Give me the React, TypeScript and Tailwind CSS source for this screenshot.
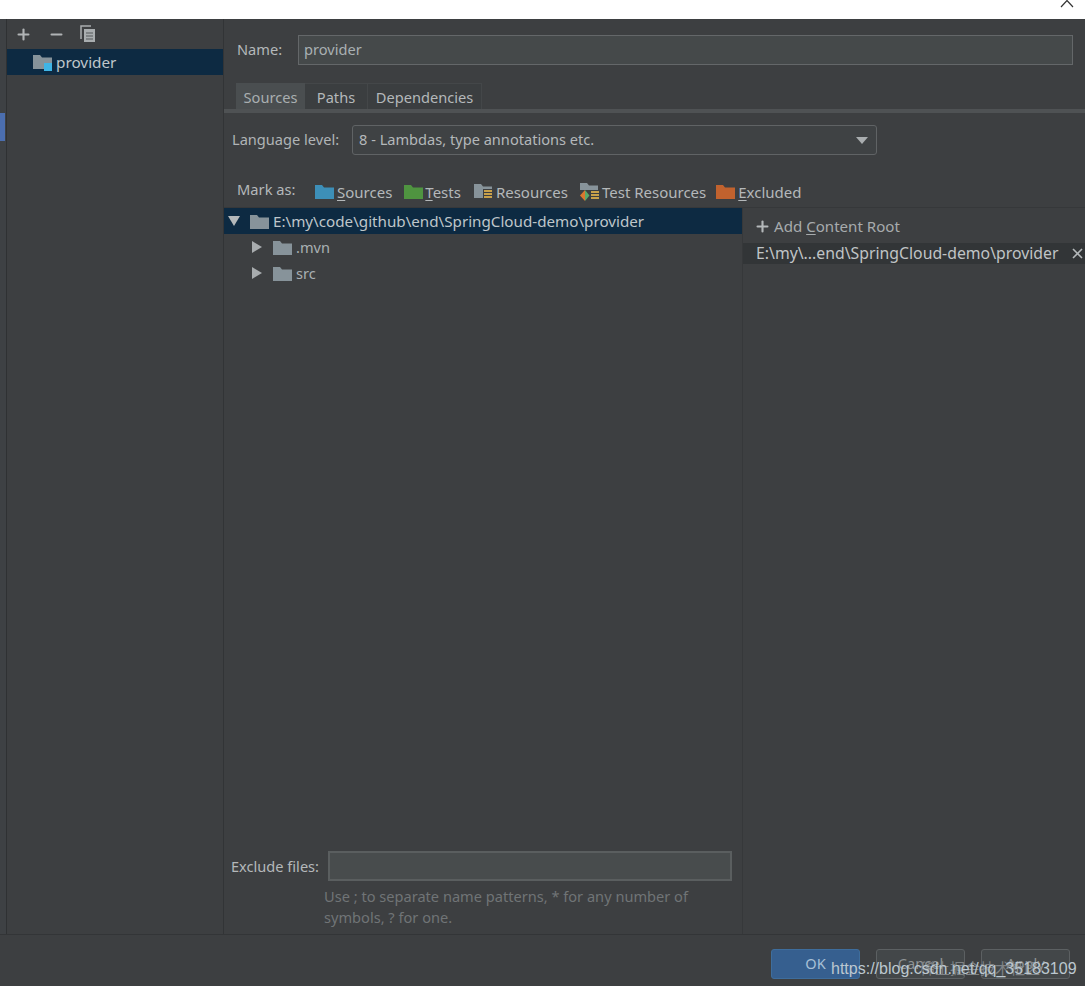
import { Plus, Minus } from "lucide-react";

function Folder({ color, className = "" }: { color: string; className?: string }) {
  return (
    <svg width="19" height="15" viewBox="0 0 19 15" className={`shrink-0 ${className}`}>
      <path d="M0 1h7l2 2.5h10V15H0z" fill={color} />
    </svg>
  );
}

function Stack({ x = 9, y = 7 }: { x?: number; y?: number }) {
  return (
    <g fill="#c9a14a">
      <rect x={x} y={y} width="8" height="2" />
      <rect x={x} y={y + 3} width="8" height="2" />
      <rect x={x} y={y + 6} width="8" height="2" />
    </g>
  );
}

function MarkItem({ icon, first, rest, className = "" }: { icon: React.ReactNode; first: string; rest: string; className?: string }) {
  return (
    <div className={`flex items-center ${className}`}>
      {icon}
      <span>
        <span className="underline underline-offset-2">{first}</span>
        {rest}
      </span>
    </div>
  );
}

function Arrow({ down = false }: { down?: boolean }) {
  return (
    <svg width="12" height="12" viewBox="0 0 12 12" className="shrink-0">
      {down ? <path d="M0 1h12L6 11z" fill="#b4b8ba" /> : <path d="M1 0l10 6-10 6z" fill="#a8acae" />}
    </svg>
  );
}

function TreeRow({ label }: { label: string }) {
  return (
    <div className="flex h-[26px] items-center pl-[27px]">
      <Arrow />
      <Folder color="#87939a" className="ml-[10px]" />
      <span className="ml-[4px] pt-[2px] text-[#a9b0b3]">{label}</span>
    </div>
  );
}

function Button({ label, primary = false }: { label: string; primary?: boolean }) {
  return (
    <div
      className={`flex h-[30px] w-[89px] items-center justify-center rounded-[3px] border ${
        primary ? "border-[#3e6d9c] bg-[#365f8f] text-[#a8c0d6]" : "border-[#5c6062] bg-[#434749] text-[#8f9496]"
      }`}
    >
      {label}
    </div>
  );
}

export default function App() {
  return (
    <div className="relative flex h-[986px] w-[1085px] flex-col overflow-hidden bg-[#3d3f41] font-['Noto_Sans',sans-serif] text-[14.6px] text-[#b4b8ba]">
      {/* title bar, cut off at the top */}
      <div className="relative h-[19px] shrink-0 bg-white">
        <svg width="14" height="8" viewBox="0 0 14 8" className="absolute right-[11px] top-0">
          <path d="M1 7L7 0.5L13 7" stroke="#333" strokeWidth="1.2" fill="none" />
        </svg>
      </div>

      <div className="flex min-h-0 flex-1">
        {/* nav rail */}
        <div className="w-[7px] shrink-0 border-r border-[#2f3133] bg-[#3e4144] pt-[94px]">
          <div className="h-[28px] w-[5px] bg-[#4b6eaf]" />
        </div>

        {/* module list */}
        <div className="w-[217px] shrink-0 border-r border-[#323436]">
          <div className="flex h-[30px] items-center pl-[8px] text-[#b0b3b5]">
            <Plus size={17} strokeWidth={3} />
            <Minus size={17} strokeWidth={3} className="ml-[16px]" />
            <svg width="16" height="18" viewBox="0 0 16 18" className="ml-[15px]">
              <path d="M1 14V1h10" stroke="#a9adaf" strokeWidth="1.5" fill="none" />
              <rect x="4" y="4" width="11" height="13" fill="#a9adaf" />
              <path d="M6 8h7M6 11h7M6 14h7" stroke="#55585a" strokeWidth="1.2" />
            </svg>
          </div>
          <div className="flex h-[26px] items-center bg-[#0d2a42] pl-[26px] text-[15.3px] text-[#bfc6ca]">
            <div className="relative h-[17px] w-[19px]">
              <Folder color="#87939a" />
              <div className="absolute bottom-0 right-0 h-[8px] w-[8px] bg-[#3fb5e6]" />
            </div>
            <span className="ml-[4px]">provider</span>
          </div>
        </div>

        {/* module settings */}
        <div className="flex min-w-0 flex-1 flex-col">
          <div className="flex h-[63px] shrink-0 items-start pl-[13px] pr-[12px] pt-[16px]">
            <span className="mt-[4px] w-[61px]">Name:</span>
            <div className="flex h-[30px] flex-1 items-center border border-[#646769] bg-[#45494a] px-[5px] text-[#a9b0b3]">provider</div>
          </div>

          <div className="flex h-[31px] shrink-0 items-end border-b-[4px] border-[#4f5254] pl-[12px]">
            <div className="flex h-[26px] w-[69px] items-center justify-center border-t border-[#4a4e50] bg-[#4a4e50] pt-[2px] text-[#a9aeb0]">Sources</div>
            <div className="flex h-[26px] w-[63px] items-center justify-center border-r border-t border-[#444749] bg-[#3b3e40] pt-[2px]">Paths</div>
            <div className="flex h-[26px] w-[114px] items-center justify-center border-r border-t border-[#444749] bg-[#3b3e40] pt-[2px]">Dependencies</div>
          </div>

          <div className="flex h-[42px] shrink-0 items-end pl-[8px]">
            <span className="mb-[4px] w-[120px] text-[#b0b4b6]">Language level:</span>
            <div className="flex h-[30px] w-[525px] items-center justify-between rounded-[3px] border border-[#606365] bg-[#3f4244] pl-[6px] pr-[8px]">
              <span>8 - Lambdas, type annotations etc.</span>
              <svg width="12" height="7" viewBox="0 0 12 7">
                <path d="M0 0h12L6 7z" fill="#a9adaf" />
              </svg>
            </div>
          </div>

          <div className="flex h-[53px] shrink-0 items-end border-b border-[#36383a] pb-[4px] pl-[13px] text-[15px]">
            <span className="mb-[3px] w-[78px] text-[14.7px]">Mark as:</span>
            <MarkItem icon={<Folder color="#3d8fb8" />} first="S" rest="ources" className="gap-[3px]" />
            <MarkItem icon={<Folder color="#4f9440" />} first="T" rest="ests" className="ml-[12px] gap-[2px]" />
            <MarkItem
              icon={
                <svg width="19" height="17" viewBox="0 0 19 17" className="shrink-0">
                  <path d="M0 1h7l2 2.5h9V15H0z" fill="#87939a" />
                  <rect x="9" y="6" width="10" height="11" fill="#3d3f41" />
                  <Stack x={10} y={7} />
                </svg>
              }
              first=""
              rest="Resources"
              className="ml-[13px] gap-[3px]"
            />
            <MarkItem
              icon={
                <svg width="19" height="19" viewBox="0 0 19 19" className="shrink-0">
                  <path d="M0 1h7l2 2.5h9V15H0z" fill="#87939a" />
                  <rect x="0" y="8" width="19" height="11" fill="#3d3f41" />
                  <path d="M0 13.5l5-5.500v11z" fill="#d9772f" />
                  <path d="M5 8l4.500 5.500-4.500 5.500z" fill="#59a869" />
                  <Stack x={11} y={9} />
                </svg>
              }
              first=""
              rest="Test Resources"
              className="ml-[12px] gap-[3px]"
            />
            <MarkItem icon={<Folder color="#c1622e" />} first="E" rest="xcluded" className="ml-[10px] gap-[3px]" />
          </div>

          <div className="flex min-h-0 flex-1">
            <div className="flex w-[519px] shrink-0 flex-col border-r border-[#36383a]">
              <div className="flex h-[26px] items-center bg-[#0d2a42] pl-[4px] text-[#bfc6ca]">
                <Arrow down />
                <Folder color="#87939a" className="ml-[10px]" />
                <span className="ml-[4px] text-[15.2px]">E:\my\code\github\end\SpringCloud-demo\provider</span>
              </div>
              <TreeRow label=".mvn" />
              <TreeRow label="src" />

              <div className="mt-auto flex h-[30px] items-center pl-[7px] pr-[10px]">
                <span className="w-[97px] shrink-0 pt-[2px]">Exclude files:</span>
                <div className="h-[30px] flex-1 border-2 border-[#5a5e5f] bg-[#484c4d]" />
              </div>
              <div className="h-[53px] pl-[100px] pt-[5px] text-[#707476] leading-[21px]">
                Use ; to separate name patterns, * for any number of
                <br />
                symbols, ? for one.
              </div>
            </div>

            <div className="min-w-0 flex-1">
              <div className="flex h-[35px] items-center pl-[11px] pt-[1px] text-[15.1px] text-[#a7abad]">
                <Plus size={17} strokeWidth={3} className="text-[#b4b8ba]" />
                <span className="ml-[3px]">
                  Add <span className="underline underline-offset-2">C</span>ontent Root
                </span>
              </div>
              <div className="flex h-[21px] items-center justify-between bg-[#323537] pl-[13px] pr-[2px] text-[15.8px] text-[#c0c4c6]">
                <span>E:\my\...end\SpringCloud-demo\provider</span>
                <svg width="11" height="11" viewBox="0 0 11 11">
                  <path d="M1 1l9 9M10 1l-9 9" stroke="#b4b8ba" strokeWidth="1.6" />
                </svg>
              </div>
            </div>
          </div>
        </div>
      </div>

      {/* footer */}
      <div className="flex h-[52px] shrink-0 items-start justify-end gap-[16px] border-t border-[#333537] pr-[15px] pt-[14px]">
        <Button label="OK" primary />
        <Button label="Cancel" />
        <Button label="Apply" />
      </div>

      {/* blog watermark over the footer */}
      <div className="absolute left-[920px] top-[957px] font-['Noto_Sans_CJK_SC',sans-serif] text-[15px] text-[#7f8386]">稀土掘金技术社区</div>
      <div className="absolute left-[831px] top-[957px] font-['Liberation_Sans',sans-serif] text-[16px] text-[#bcc7cf]">https://blog.csdn.net/qq_35183109</div>
    </div>
  );
}
